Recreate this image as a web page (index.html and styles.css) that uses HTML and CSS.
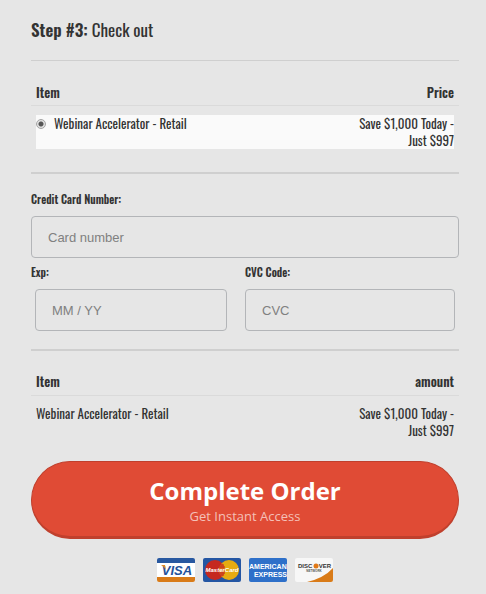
FILE: index.html
```html
<!DOCTYPE html>
<html lang="en">
<head>
<meta charset="utf-8">
<meta name="viewport" content="width=device-width, initial-scale=1">
<title>Check out</title>
<link rel="stylesheet" href="styles.css">
</head>
<body>
<form class="checkout">
  <h1 class="title"><strong>Step #3:</strong> Check out</h1>
  <hr class="rule rule-thin">
  <table class="items">
    <thead><tr><th>Item</th><th class="price">Price</th></tr></thead>
    <tbody>
      <tr class="selected">
        <td><label class="choice"><input class="radio" type="radio" name="product" checked>Webinar Accelerator - Retail</label></td>
        <td class="price">Save $1,000 Today -<br>Just $997</td>
      </tr>
    </tbody>
  </table>
  <hr class="rule">
  <div class="payment">
    <div class="field">
      <label class="label" for="card">Credit Card Number:</label>
      <input class="input" id="card" type="text" placeholder="Card number">
    </div>
    <div class="columns">
      <div class="field field-exp">
        <label class="label" for="exp">Exp:</label>
        <input class="input" id="exp" type="text" placeholder="MM / YY">
      </div>
      <div class="field field-cvc">
        <label class="label" for="cvc">CVC Code:</label>
        <input class="input" id="cvc" type="text" placeholder="CVC">
      </div>
    </div>
  </div>
  <hr class="rule">
  <table class="items">
    <thead><tr><th>Item</th><th class="price">amount</th></tr></thead>
    <tbody>
      <tr>
        <td>Webinar Accelerator - Retail</td>
        <td class="price">Save $1,000 Today -<br>Just $997</td>
      </tr>
    </tbody>
  </table>
  <button class="order" type="submit">
    <span class="order-main">Complete Order</span>
    <span class="order-sub">Get Instant Access</span>
  </button>
  <div class="cards">
    <svg class="card" viewBox="0 0 38 24" role="img" aria-label="Visa">
      <rect width="38" height="24" rx="2" fill="#fff"/>
      <path d="M0 5V2Q0 0 2 0H36Q38 0 38 2V5Z" fill="#2858a0"/>
      <path d="M0 19H38V22Q38 24 36 24H2Q0 24 0 22Z" fill="#d97b18"/>
      <text class="visa" x="20" y="17" text-anchor="middle">VISA</text>
      <path d="M4 7H8L9 12Q8 9 4 7Z" fill="#e08a24"/>
    </svg>
    <svg class="card" viewBox="0 0 38 24" role="img" aria-label="MasterCard">
      <rect width="38" height="24" rx="2" fill="#2456a3"/>
      <circle cx="12" cy="12" r="10" fill="#c5281f"/>
      <circle cx="26" cy="12" r="10" fill="#e5ab12"/>
      <path d="M19 4.900A10 10 0 0 1 19 19.100A10 10 0 0 1 19 4.900Z" fill="#d4601b"/>
      <path d="M17 7H21M16 9H22M16 15H22M17 17H21" stroke="#c5281f"/>
      <text class="master" x="19" y="14" text-anchor="middle">MasterCard</text>
    </svg>
    <svg class="card" viewBox="0 0 38 24" role="img" aria-label="American Express">
      <rect width="38" height="24" rx="2" fill="#2e70c9"/>
      <text class="amex" x="0" y="11">AMERICAN</text>
      <text class="amex" x="38" y="19" text-anchor="end">EXPRESS</text>
    </svg>
    <svg class="card" viewBox="0 0 38 24" role="img" aria-label="Discover Network">
      <rect width="38" height="24" rx="2" fill="#f7f7f7"/>
      <path d="M12 24Q29 20 38 10V22Q38 24 36 24Z" fill="#d97b18"/>
      <text class="discover" x="3" y="10">DISC</text>
      <circle cx="21" cy="8" r="2.500" fill="#e07818"/>
      <text class="discover" x="36" y="10" text-anchor="end">VER</text>
      <text class="network" x="19" y="14" text-anchor="middle">NETWORK</text>
    </svg>
  </div>
</form>
</body>
</html>
```

FILE: styles.css
```css
* { box-sizing: border-box; }

body {
  margin: 0;
  background: #e6e6e6;
  color: #333;
  font-family: Oswald, "Liberation Sans Narrow", "Liberation Sans", sans-serif;
  font-size: 13px;
  line-height: 17px;
}

.checkout { padding: 18px 27px 12px 31px; }

.title {
  margin: 0 0 18px;
  font-size: 17px;
  font-weight: 400;
  line-height: 24px;
}
.title strong { font-weight: 600; }

.rule {
  height: 2px;
  margin: 0;
  border: 0;
  background: #cfcfcf;
}
.rule-thin { height: 1px; }

.items {
  width: 100%;
  margin: 22px 0;
  border-spacing: 0;
}
.items th {
  padding: 0 5px 5px;
  border-bottom: 1px solid #dadada;
  font-weight: 600;
  text-align: left;
}
.items td {
  padding: 9px 0 0 5px;
  vertical-align: top;
  background-clip: content-box;
}
.items .price { text-align: right; }
.items td.price { padding: 9px 5px 0 0; }
.selected td { background-color: #fafafa; }
.rule-thin + .items { margin: 23px 0; }
.rule-thin + .items th { padding-bottom: 4px; }

.choice {
  display: flex;
  align-items: center;
  gap: 8px;
}
.radio {
  appearance: none;
  width: 10px;
  height: 10px;
  margin: 0;
  border: 1px solid #a5a5a5;
  border-radius: 50%;
  background: radial-gradient(circle, #555 2px, #e0e0e0 3px);
}

.payment { padding: 16px 0 18px; }
.label {
  display: block;
  margin-bottom: 8px;
  font-size: 11px;
  font-weight: 600;
  line-height: 18px;
}
.input {
  display: block;
  width: 100%;
  height: 42px;
  padding: 0 16px;
  border: 1px solid #b3b5b8;
  border-radius: 4px;
  background: transparent;
  color: #333;
  font: 13px "Liberation Sans", sans-serif;
}
.input::placeholder { color: #808080; opacity: 1; }
.columns {
  display: grid;
  grid-template-columns: 1fr 1fr;
  margin-top: 5px;
}
.field-exp { padding-right: 18px; }
.field-exp .input { width: calc(100% - 4px); margin-left: 4px; }
.field-cvc { padding-right: 4px; }

.order {
  display: flex;
  flex-direction: column;
  align-items: center;
  justify-content: center;
  width: 100%;
  height: 78px;
  padding: 4px 0 0;
  border: 1px solid #c0402d;
  border-bottom-width: 3px;
  border-radius: 39px;
  background: #e04b35;
  color: #fff;
  font-family: "Open Sans", sans-serif;
}
.order-main { font-size: 24px; font-weight: 700; line-height: 30px; }
.order-sub { color: #f4c0b8; font-size: 13px; line-height: 20px; }

.cards {
  display: flex;
  justify-content: center;
  gap: 8px;
  margin-top: 19px;
}
.card { width: 38px; height: 24px; }
.card text { font-family: "Liberation Sans", sans-serif; font-weight: 700; }
.card .visa { fill: #24529b; font-size: 13px; font-style: italic; }
.card .master { fill: #fff; font-size: 6px; font-style: italic; }
.card .amex { fill: #fff; font-size: 7px; }
.card .discover { fill: #333; font-size: 6px; }
.card .network { fill: #555; font-size: 3px; }
```
